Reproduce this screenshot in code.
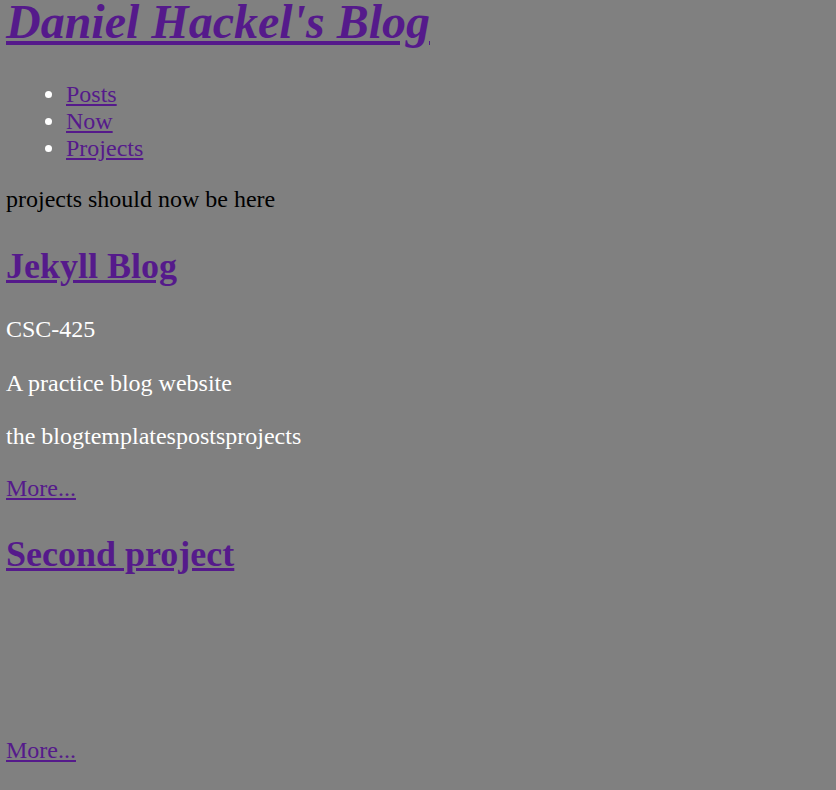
const linkCls = 'text-[#551a8b] underline';

export default function App() {
  return (
    <div className="min-h-[790px] bg-[#808080] px-[6px] pt-[1px] font-['Liberation_Serif','Times_New_Roman',serif] text-[24px] leading-[27px] text-black">
      <h1 className="-mt-[6.5px] text-[48px] leading-[54px] font-bold italic">
        <a href="#" className={`${linkCls} pr-[2px]`}>Daniel Hackel's Blog</a>
      </h1>

      <ul className="mt-[32.5px] list-disc pl-[60px] text-white">
        <li><a href="#" className={linkCls}>Posts</a></li>
        <li><a href="#" className={linkCls}>Now</a></li>
        <li><a href="#" className={linkCls}>Projects</a></li>
      </ul>

      <p className="mt-[24px]">projects should now be here</p>

      <div className="text-white">
        <h2 className="mt-[33px] text-[36px] leading-[40px] font-bold">
          <a href="#" className={linkCls}>Jekyll Blog</a>
        </h2>
        <p className="mt-[30px]">CSC-425</p>
        <p className="mt-[27px]">A practice blog website</p>
        <p className="mt-[26px]">the blogtemplatespostsprojects</p>
        <p className="mt-[25px]"><a href="#" className={linkCls}>More...</a></p>

        <h2 className="mt-[32px] text-[36px] leading-[40px] font-bold">
          <a href="#" className={linkCls}>Second project</a>
        </h2>
        <p className="mt-[163px]"><a href="#" className={linkCls}>More...</a></p>
      </div>
    </div>
  );
}
